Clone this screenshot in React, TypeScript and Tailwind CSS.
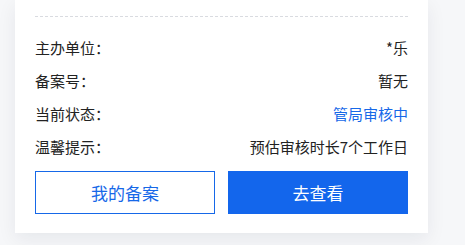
import React from "react";

const rows: { label: string; value: string; blue?: boolean }[] = [
  { label: "主办单位：", value: "*乐" },
  { label: "备案号：", value: "暂无" },
  { label: "当前状态：", value: "管局审核中", blue: true },
  { label: "温馨提示：", value: "预估审核时长7个工作日" },
];

export default function App() {
  return (
    <div
      className="w-[465px] h-[245px] bg-[#f6f7f9] overflow-hidden"
      style={{ fontFamily: '"Noto Sans CJK SC", "Noto Sans", sans-serif' }}
    >
      <div className="ml-[15px] w-[413px] bg-white px-[20px] pt-[16px] pb-[19px] shadow-[0_6px_18px_rgba(20,30,60,0.07)]">
        <div className="border-t border-dashed border-[#d9dbe0]" />
        <div className="mt-[14px]">
          {rows.map((r) => (
            <div key={r.label} className="h-[33px] flex items-center justify-between text-[15px] leading-[20px]">
              <span className="text-[#222]">{r.label}</span>
              <span className={r.blue ? "text-[#1668e8]" : "text-[#222]"}>{r.value}</span>
            </div>
          ))}
        </div>
        <div className="mt-[8px] flex gap-[13px]">
          <button className="w-[180px] h-[43px] border border-[#1668e8] bg-white text-[#1668e8] text-[17px]">
            我的备案
          </button>
          <button className="w-[180px] h-[43px] bg-[#1366ec] text-white text-[17px]">
            去查看
          </button>
        </div>
      </div>
    </div>
  );
}
